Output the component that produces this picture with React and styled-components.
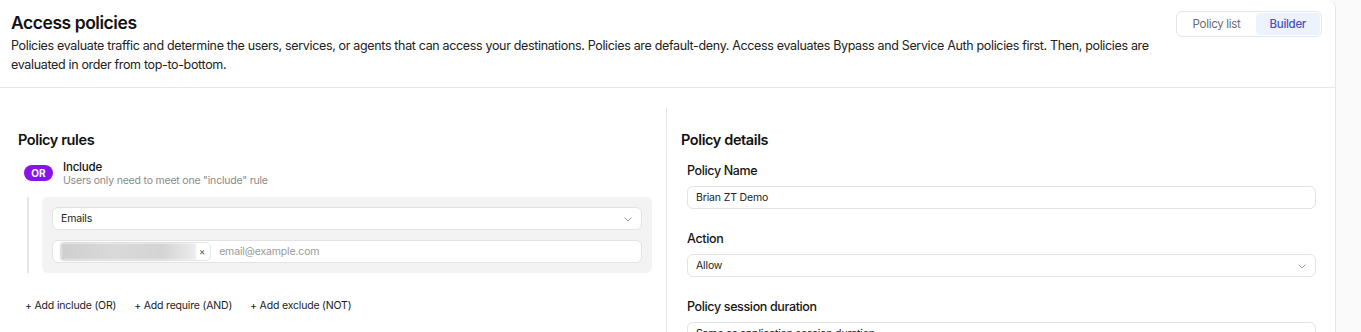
import React from 'react';
import styled, { createGlobalStyle } from 'styled-components';

const GlobalStyle = createGlobalStyle`
    html, body {
        margin: 0;
        padding: 0;
        background: #fafafa;
        font-family: Inter, "Noto Sans", sans-serif;
        color: #1b1b1b;
    }
`

const Page = styled.div`
    display: flex;
    min-height: 100vh;
`
const Panel = styled.div`
    width: 1336px;
    background: #fff;
    border-right: 1px solid #e6e6e6;
    border-top-right-radius: 8px;
    box-sizing: border-box;
`
const Header = styled.header`
    display: flex;
    justify-content: space-between;
    align-items: flex-start;
    padding: 11px 13px 13px 11px;
    border-bottom: 1px solid #e8e8e8;
`
const HeaderText = styled.div`
    max-width: 1150px;
`
const Title = styled.h1`
    margin: 0;
    font-size: 17.5px;
    line-height: 24px;
    font-weight: 600;
    letter-spacing: -0.45px;
    color: #111;
`
const Description = styled.p`
    margin: 1px 0 0;
    font-size: 12.5px;
    line-height: 19px;
    letter-spacing: -0.34px;
    color: #222;
`
const Toggle = styled.div`
    display: flex;
    padding: 1px;
    border: 1px solid #e6e6e6;
    border-radius: 6px;
`
const ToggleItem = styled.div`
    font-size: 11.5px;
    line-height: 22px;
    letter-spacing: -0.3px;
    padding: 0 ${p => p.$active ? '14px' : '15px'};
    border-radius: 4px;
    color: ${p => p.$active ? '#4b4fc4' : '#6b6b6b'};
    background: ${p => p.$active ? '#edf2ff' : 'transparent'};
    font-weight: ${p => p.$active ? 500 : 400};
`
const Body = styled.div`
    display: grid;
    grid-template-columns: 666px 1fr;
    margin-top: 20px;
`
const LeftCol = styled.section`
    padding: 22px 14px 0 18px;
`
const RightCol = styled.section`
    border-left: 1px solid #e6e6e6;
    padding: 22px 19px 0 14px;
    min-height: 260px;
`
const SectionTitle = styled.h2`
    margin: 0;
    font-size: 14.5px;
    line-height: 20px;
    font-weight: 600;
    letter-spacing: -0.4px;
    color: #111;
`
const IncludeRow = styled.div`
    display: flex;
    align-items: flex-start;
    gap: 10px;
    margin: 10px 0 0 6px;
`
const Badge = styled.span`
    display: inline-flex;
    align-items: center;
    justify-content: center;
    width: 29px;
    height: 16px;
    margin-top: 5px;
    border-radius: 8px;
    background: #8a12e6;
    color: #fff;
    font-size: 10px;
    font-weight: 700;
`
const IncludeTitle = styled.div`
    font-size: 11.5px;
    line-height: 14px;
    letter-spacing: -0.2px;
    color: #111;
    font-weight: 500;
`
const IncludeHint = styled.div`
    font-size: 10.5px;
    line-height: 14px;
    letter-spacing: -0.2px;
    color: #8a8a8a;
`
const RuleGroup = styled.div`
    display: flex;
    gap: 13px;
    margin: 9px 0 0 9px;
`
const RuleLine = styled.div`
    width: 2px;
    background: #e5e5e5;
`
const RuleBox = styled.div`
    flex: 1;
    display: flex;
    flex-direction: column;
    gap: 10px;
    padding: 10px;
    background: #f3f3f3;
    border-radius: 6px;
`
const Field = styled.div`
    display: flex;
    align-items: center;
    gap: 8px;
    height: 23px;
    box-sizing: border-box;
    padding: 0 ${p => p.$tight ? '7px' : '8px'};
    background: #fff;
    border: 1px solid #e3e3e3;
    border-radius: 6px;
    font-size: 10.5px;
    letter-spacing: -0.15px;
    color: #222;
`
const Chevron = styled.svg`
    margin-left: auto;
    width: 10px;
    height: 10px;
`
const Chip = styled.div`
    display: flex;
    align-items: center;
    height: 17px;
    border: 1px solid #e6e6e6;
    border-radius: 5px;
    padding-right: 5px;
`
const Redacted = styled.div`
    width: 135px;
    height: 17px;
    background: linear-gradient(90deg, #cfcfcf 0%, #d9d9d9 40%, #d4d4d4 75%, #ececec 100%);
    filter: blur(1px);
`
const ChipClose = styled.span`
    margin-left: 3px;
    font-size: 9.5px;
    color: #555;
`
const Placeholder = styled.span`
    color: #9a9a9a;
`
const AddRow = styled.div`
    display: flex;
    gap: 18px;
    margin: 26px 0 0 7px;
`
const AddButton = styled.span`
    font-size: 10.5px;
    letter-spacing: -0.18px;
    color: #1b1b1b;
    line-height: 14px;
`
const FieldGroup = styled.div`
    margin: 12px 0 0 6px;
`
const Label = styled.div`
    font-size: 12.5px;
    line-height: 18px;
    font-weight: 500;
    letter-spacing: -0.36px;
    color: #151515;
    margin: ${p => p.$first ? '0' : '21px'} 0 6px;
`

const ChevronIcon = () => (
    <Chevron viewBox="0 0 10 10">
        <path d="M1.5 3.5 L5 7 L8.5 3.5" fill="none" stroke="#9a9a9a" strokeWidth="1" />
    </Chevron>
)

const App = () => {
    return (
        <Page>
            <GlobalStyle />
            <Panel>
                <Header>
                    <HeaderText>
                        <Title>Access policies</Title>
                        <Description>
                            Policies evaluate traffic and determine the users, services, or agents that can access your destinations. Policies are default-deny. Access evaluates Bypass and Service Auth policies first. Then, policies are evaluated in order from top-to-bottom.
                        </Description>
                    </HeaderText>
                    <Toggle>
                        <ToggleItem>Policy list</ToggleItem>
                        <ToggleItem $active>Builder</ToggleItem>
                    </Toggle>
                </Header>
                <Body>
                    <LeftCol>
                        <SectionTitle>Policy rules</SectionTitle>
                        <IncludeRow>
                            <Badge>OR</Badge>
                            <div>
                                <IncludeTitle>Include</IncludeTitle>
                                <IncludeHint>Users only need to meet one "include" rule</IncludeHint>
                            </div>
                        </IncludeRow>
                        <RuleGroup>
                            <RuleLine />
                            <RuleBox>
                                <Field>
                                    Emails
                                    <ChevronIcon />
                                </Field>
                                <Field $tight>
                                    <Chip>
                                        <Redacted />
                                        <ChipClose>×</ChipClose>
                                    </Chip>
                                    <Placeholder>email@example.com</Placeholder>
                                </Field>
                            </RuleBox>
                        </RuleGroup>
                        <AddRow>
                            <AddButton>+ Add include (OR)</AddButton>
                            <AddButton>+ Add require (AND)</AddButton>
                            <AddButton>+ Add exclude (NOT)</AddButton>
                        </AddRow>
                    </LeftCol>
                    <RightCol>
                        <SectionTitle>Policy details</SectionTitle>
                        <FieldGroup>
                            <Label $first>Policy Name</Label>
                            <Field>Brian ZT Demo</Field>
                            <Label>Action</Label>
                            <Field>
                                Allow
                                <ChevronIcon />
                            </Field>
                            <Label>Policy session duration</Label>
                            <Field>
                                Same as application session duration
                                <ChevronIcon />
                            </Field>
                        </FieldGroup>
                    </RightCol>
                </Body>
            </Panel>
        </Page>
    )
}
export default App;
